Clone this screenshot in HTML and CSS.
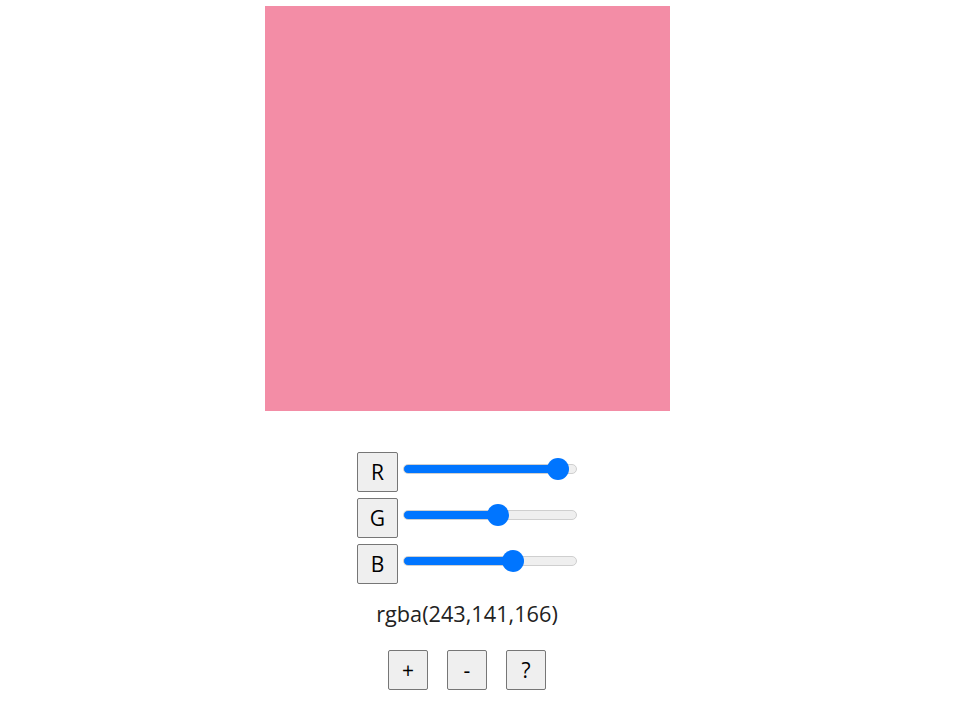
FILE: index.html
```html
<!DOCTYPE html>
<html>
<head>
<meta charset="utf-8">
<link rel="stylesheet" href="styles.css">
</head>
<body>
<div class="app">
  <div class="swatch"></div>
  <div class="sliders">
    <div class="row"><button class="btn">R</button><input class="range" type="range" min="0" max="255" value="243" style="--p:95.3%"></div>
    <div class="row"><button class="btn">G</button><input class="range" type="range" min="0" max="255" value="141" style="--p:55.3%"></div>
    <div class="row"><button class="btn">B</button><input class="range" type="range" min="0" max="255" value="166" style="--p:65.1%"></div>
  </div>
  <div class="value">rgba(243,141,166)</div>
  <div class="actions">
    <button class="btn">+</button>
    <button class="btn">-</button>
    <button class="btn">?</button>
  </div>
</div>
</body>
</html>
```
FILE: styles.css
```css
html, body { margin: 0; padding: 0; background: #fff; }
body { font-family: "Open Sans", "Noto Sans", sans-serif; color: #222; }
.app {
  width: 934px;
  display: flex;
  flex-direction: column;
  align-items: center;
  padding-top: 6px;
}
.swatch { width: 405px; height: 405px; background: #f38da6; flex-shrink: 0; }
.sliders { margin-top: 41px; display: flex; flex-direction: column; gap: 6px; }
.row { display: flex; align-items: flex-start; gap: 5px; }
.btn {
  width: 41px; height: 40px; padding: 0; margin: 0;
  background: #efefef; border: 1px solid #767676; border-radius: 2px;
  font-family: "Open Sans", "Noto Sans", sans-serif; font-size: 21px; color: #000;
  display: flex; align-items: center; justify-content: center;
}
.range {
  -webkit-appearance: none; appearance: none;
  width: 174px; height: 22px; margin: 6px 0 0 0; background: transparent;
}
.range::-webkit-slider-runnable-track {
  height: 10px; border-radius: 5px; box-sizing: border-box;
  border: 1px solid #cfcfcf;
  background: linear-gradient(to right, #0075ff 0 var(--p), #efefef var(--p) 100%);
}
.range::-webkit-slider-thumb {
  -webkit-appearance: none; appearance: none;
  width: 22px; height: 22px; border-radius: 50%; background: #0075ff; border: none;
  margin-top: -7px;
}
.value { margin-top: 15px; font-size: 21.7px; line-height: 29px; color: #222; }
.actions { margin-top: 22px; display: flex; gap: 19px; }
.actions .btn { width: 40px; }
```
